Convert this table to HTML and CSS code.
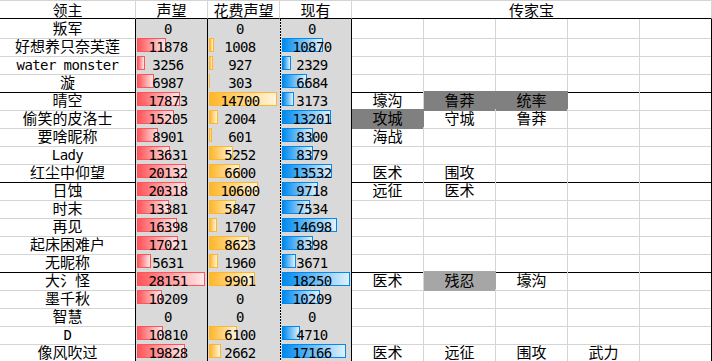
FILE: index.html
```html
<!DOCTYPE html>
<html lang="zh-CN">
<head>
<meta charset="utf-8">
<title>传家宝</title>
<link rel="stylesheet" href="styles.css">
</head>
<body>
<div class="sheet">
  <div class="row head">
    <div class="cell">领主</div>
    <div class="cell">声望</div>
    <div class="cell">花费声望</div>
    <div class="cell">现有</div>
    <div class="cell">传家宝</div>
  </div>

  <div class="row">
    <div class="cell name">叛军</div>
    <div class="cell val rep"><span class="n">0</span></div>
    <div class="cell val cost"><span class="n">0</span></div>
    <div class="cell val cur"><span class="n">0</span></div>
    <div class="cell item"></div><div class="cell item"></div><div class="cell item"></div><div class="cell item"></div><div class="cell item"></div>
  </div>
  <div class="row">
    <div class="cell name">好想养只奈芙莲</div>
    <div class="cell val rep"><span class="bar red" style="width:29px"></span><span class="n">11878</span></div>
    <div class="cell val cost"><span class="bar orange" style="width:5px"></span><span class="n">1008</span></div>
    <div class="cell val cur"><span class="bar blue" style="width:41px"></span><span class="n">10870</span></div>
    <div class="cell item"></div><div class="cell item"></div><div class="cell item"></div><div class="cell item"></div><div class="cell item"></div>
  </div>
  <div class="row">
    <div class="cell name"><span class="mono">water monster</span></div>
    <div class="cell val rep"><span class="bar red" style="width:8px"></span><span class="n">3256</span></div>
    <div class="cell val cost"><span class="bar orange" style="width:4px"></span><span class="n">927</span></div>
    <div class="cell val cur"><span class="bar blue" style="width:9px"></span><span class="n">2329</span></div>
    <div class="cell item"></div><div class="cell item"></div><div class="cell item"></div><div class="cell item"></div><div class="cell item"></div>
  </div>
  <div class="row end">
    <div class="cell name">漩</div>
    <div class="cell val rep"><span class="bar red" style="width:17px"></span><span class="n">6987</span></div>
    <div class="cell val cost"><span class="bar orange thin" style="width:1px"></span><span class="n">303</span></div>
    <div class="cell val cur"><span class="bar blue" style="width:25px"></span><span class="n">6684</span></div>
    <div class="cell item"></div><div class="cell item"></div><div class="cell item"></div><div class="cell item"></div><div class="cell item"></div>
  </div>

  <div class="row">
    <div class="cell name">晴空</div>
    <div class="cell val rep"><span class="bar red" style="width:43px"></span><span class="n">17873</span></div>
    <div class="cell val cost"><span class="bar orange" style="width:68px"></span><span class="n">14700</span></div>
    <div class="cell val cur"><span class="bar blue" style="width:12px"></span><span class="n">3173</span></div>
    <div class="cell item">壕沟</div><div class="cell item dark">鲁莽</div><div class="cell item dark">统率</div><div class="cell item"></div><div class="cell item"></div>
  </div>
  <div class="row">
    <div class="cell name">偷笑的皮洛士</div>
    <div class="cell val rep"><span class="bar red" style="width:37px"></span><span class="n">15205</span></div>
    <div class="cell val cost"><span class="bar orange" style="width:9px"></span><span class="n">2004</span></div>
    <div class="cell val cur"><span class="bar blue" style="width:49px"></span><span class="n">13201</span></div>
    <div class="cell item dark">攻城</div><div class="cell item">守城</div><div class="cell item">鲁莽</div><div class="cell item"></div><div class="cell item"></div>
  </div>
  <div class="row">
    <div class="cell name">要啥昵称</div>
    <div class="cell val rep"><span class="bar red" style="width:21px"></span><span class="n">8901</span></div>
    <div class="cell val cost"><span class="bar orange" style="width:3px"></span><span class="n">601</span></div>
    <div class="cell val cur"><span class="bar blue" style="width:31px"></span><span class="n">8300</span></div>
    <div class="cell item">海战</div><div class="cell item"></div><div class="cell item"></div><div class="cell item"></div><div class="cell item"></div>
  </div>
  <div class="row">
    <div class="cell name"><span class="mono">Lady</span></div>
    <div class="cell val rep"><span class="bar red" style="width:33px"></span><span class="n">13631</span></div>
    <div class="cell val cost"><span class="bar orange" style="width:24px"></span><span class="n">5252</span></div>
    <div class="cell val cur"><span class="bar blue" style="width:31px"></span><span class="n">8379</span></div>
    <div class="cell item"></div><div class="cell item"></div><div class="cell item"></div><div class="cell item"></div><div class="cell item"></div>
  </div>
  <div class="row end">
    <div class="cell name">红尘中仰望</div>
    <div class="cell val rep"><span class="bar red" style="width:49px"></span><span class="n">20132</span></div>
    <div class="cell val cost"><span class="bar orange" style="width:31px"></span><span class="n">6600</span></div>
    <div class="cell val cur"><span class="bar blue" style="width:50px"></span><span class="n">13532</span></div>
    <div class="cell item">医术</div><div class="cell item">围攻</div><div class="cell item"></div><div class="cell item"></div><div class="cell item"></div>
  </div>

  <div class="row">
    <div class="cell name">日蚀</div>
    <div class="cell val rep"><span class="bar red" style="width:49px"></span><span class="n">20318</span></div>
    <div class="cell val cost"><span class="bar orange" style="width:49px"></span><span class="n">10600</span></div>
    <div class="cell val cur"><span class="bar blue" style="width:36px"></span><span class="n">9718</span></div>
    <div class="cell item">远征</div><div class="cell item">医术</div><div class="cell item"></div><div class="cell item"></div><div class="cell item"></div>
  </div>
  <div class="row">
    <div class="cell name">时末</div>
    <div class="cell val rep"><span class="bar red" style="width:32px"></span><span class="n">13381</span></div>
    <div class="cell val cost"><span class="bar orange" style="width:27px"></span><span class="n">5847</span></div>
    <div class="cell val cur"><span class="bar blue" style="width:28px"></span><span class="n">7534</span></div>
    <div class="cell item"></div><div class="cell item"></div><div class="cell item"></div><div class="cell item"></div><div class="cell item"></div>
  </div>
  <div class="row">
    <div class="cell name">再见</div>
    <div class="cell val rep"><span class="bar red" style="width:40px"></span><span class="n">16398</span></div>
    <div class="cell val cost"><span class="bar orange" style="width:8px"></span><span class="n">1700</span></div>
    <div class="cell val cur"><span class="bar blue" style="width:55px"></span><span class="n">14698</span></div>
    <div class="cell item"></div><div class="cell item"></div><div class="cell item"></div><div class="cell item"></div><div class="cell item"></div>
  </div>
  <div class="row">
    <div class="cell name">起床困难户</div>
    <div class="cell val rep"><span class="bar red" style="width:41px"></span><span class="n">17021</span></div>
    <div class="cell val cost"><span class="bar orange" style="width:40px"></span><span class="n">8623</span></div>
    <div class="cell val cur"><span class="bar blue" style="width:31px"></span><span class="n">8398</span></div>
    <div class="cell item"></div><div class="cell item"></div><div class="cell item"></div><div class="cell item"></div><div class="cell item"></div>
  </div>
  <div class="row end">
    <div class="cell name">无昵称</div>
    <div class="cell val rep"><span class="bar red" style="width:14px"></span><span class="n">5631</span></div>
    <div class="cell val cost"><span class="bar orange" style="width:9px"></span><span class="n">1960</span></div>
    <div class="cell val cur"><span class="bar blue" style="width:14px"></span><span class="n">3671</span></div>
    <div class="cell item"></div><div class="cell item"></div><div class="cell item"></div><div class="cell item"></div><div class="cell item"></div>
  </div>

  <div class="row">
    <div class="cell name">大氵怪</div>
    <div class="cell val rep"><span class="bar red" style="width:68px"></span><span class="n">28151</span></div>
    <div class="cell val cost"><span class="bar orange" style="width:46px"></span><span class="n">9901</span></div>
    <div class="cell val cur"><span class="bar blue" style="width:68px"></span><span class="n">18250</span></div>
    <div class="cell item">医术</div><div class="cell item mid">残忍</div><div class="cell item">壕沟</div><div class="cell item"></div><div class="cell item"></div>
  </div>
  <div class="row">
    <div class="cell name">墨千秋</div>
    <div class="cell val rep"><span class="bar red" style="width:25px"></span><span class="n">10209</span></div>
    <div class="cell val cost"><span class="n">0</span></div>
    <div class="cell val cur"><span class="bar blue" style="width:38px"></span><span class="n">10209</span></div>
    <div class="cell item"></div><div class="cell item"></div><div class="cell item"></div><div class="cell item"></div><div class="cell item"></div>
  </div>
  <div class="row">
    <div class="cell name">智慧</div>
    <div class="cell val rep"><span class="n">0</span></div>
    <div class="cell val cost"><span class="n">0</span></div>
    <div class="cell val cur"><span class="n">0</span></div>
    <div class="cell item"></div><div class="cell item"></div><div class="cell item"></div><div class="cell item"></div><div class="cell item"></div>
  </div>
  <div class="row">
    <div class="cell name"><span class="mono">D</span></div>
    <div class="cell val rep"><span class="bar red" style="width:26px"></span><span class="n">10810</span></div>
    <div class="cell val cost"><span class="bar orange" style="width:28px"></span><span class="n">6100</span></div>
    <div class="cell val cur"><span class="bar blue" style="width:18px"></span><span class="n">4710</span></div>
    <div class="cell item"></div><div class="cell item"></div><div class="cell item"></div><div class="cell item"></div><div class="cell item"></div>
  </div>
  <div class="row end">
    <div class="cell name">像风吹过</div>
    <div class="cell val rep"><span class="bar red" style="width:48px"></span><span class="n">19828</span></div>
    <div class="cell val cost"><span class="bar orange" style="width:12px"></span><span class="n">2662</span></div>
    <div class="cell val cur"><span class="bar blue" style="width:64px"></span><span class="n">17166</span></div>
    <div class="cell item">医术</div><div class="cell item">远征</div><div class="cell item">围攻</div><div class="cell item">武力</div><div class="cell item"></div>
  </div>
</div>
</body>
</html>
```

FILE: styles.css
```css
* {
  box-sizing: border-box;
}

html,
body {
  margin: 0;
  background: #fff;
}

body {
  font-family: "Noto Sans CJK SC", "Noto Sans", sans-serif;
  font-size: 15px;
  color: #000;
}

.sheet {
  width: 712px;
}

.row {
  display: grid;
  grid-template-columns: 136px repeat(8, 72px);
  height: 18px;
}

.row.head {
  height: 19px;
  grid-template-columns: 136px repeat(3, 72px) 360px;
}

.cell {
  position: relative;
  height: 100%;
  border-right: 1px solid #d4d4d4;
  border-bottom: 1px solid #d4d4d4;
  line-height: 17px;
  text-align: center;
  white-space: nowrap;
}

.head .cell {
  border-top: 1px solid #d4d4d4;
  border-bottom-color: #000;
}

.name {
  border-right-color: #000;
}

.val {
  padding-right: 7px;
  background: #d9d9d9;
  border-bottom-color: #d9d9d9;
}

.rep {
  border-right-color: #000;
}

.cost {
  border-right-color: #d9d9d9;
}

.cur {
  border-right-color: #000;
  border-bottom-color: #000;
  background:
    repeating-linear-gradient(to bottom, #000 0 2px, #fff 2px 3px) 0 0 / 1px 100% no-repeat,
    #d9d9d9;
}

.item:last-child {
  border-right-color: #000;
}

.dark {
  background: #808080;
  border-right-color: #808080;
  border-bottom-color: #808080;
}

.mid {
  background: #a6a6a6;
  border-right-color: #a6a6a6;
  border-bottom-color: #a6a6a6;
}

.row.end .cell {
  border-bottom-color: #000;
}

.n,
.mono {
  position: relative;
  font-family: "DejaVu Sans Mono", "Liberation Mono", monospace;
  font-size: 14px;
  letter-spacing: -0.6px;
}

.bar {
  position: absolute;
  top: 1px;
  left: 1px;
  height: 14px;
  border: 1px solid;
}

.cur .bar {
  left: 2px;
}

.bar.thin {
  border-width: 0 0 0 1px;
}

.red {
  border-color: #ff555a;
  background: linear-gradient(to right, #ff555a, #ffe8e9);
}

.orange {
  border-color: #ffb628;
  background: linear-gradient(to right, #ffb628, #fff4df);
}

.blue {
  border-color: #008aef;
  background: linear-gradient(to right, #008aef, #e1f1fd);
}
```
